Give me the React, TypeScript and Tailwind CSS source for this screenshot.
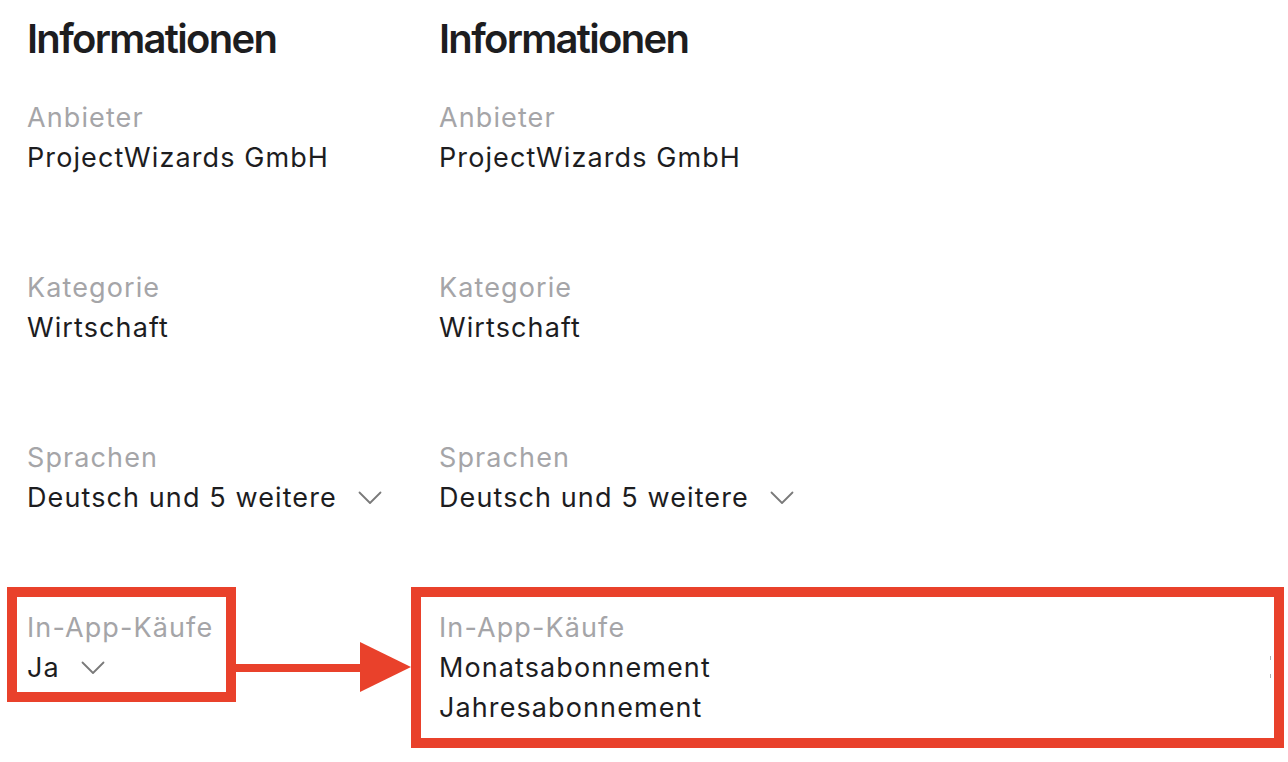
import React from "react";

const Chevron = () => (
  <svg width="24" height="14" viewBox="0 0 24 14" className="shrink-0">
    <path d="M1.5 1.5 L12 12 L22.5 1.5" fill="none" stroke="#7a7a7a" strokeWidth="1.8" strokeLinecap="round" strokeLinejoin="round" />
  </svg>
);

type Item = { label: string; values: string[]; chevron?: boolean };

const Section = ({ label, values, chevron }: Item) => (
  <div className="flex flex-col">
    <div className="text-[27px] leading-[40px] tracking-[1.1px] text-[#a5a5a8]">{label}</div>
    {values.map((v) => (
      <div key={v} className="flex items-center gap-[21px] text-[27px] leading-[40px] tracking-[1.1px] text-[#1d1d1f]">
        <span>{v}</span>
        {chevron && <Chevron />}
      </div>
    ))}
  </div>
);

const Column = ({ inApp }: { inApp: string[] }) => (
  <div className="flex w-[412px] flex-col">
    <h1 className="pt-[15px] text-[40px] font-semibold leading-[48px] tracking-[-1.7px] text-[#1d1d1f]">Informationen</h1>
    <div className="mt-[35px] flex flex-col gap-[90px]">
      <Section label="Anbieter" values={["ProjectWizards GmbH"]} />
      <Section label="Kategorie" values={["Wirtschaft"]} />
      <Section label="Sprachen" values={["Deutsch und 5 weitere"]} chevron />
      <Section label="In-App-Käufe" values={inApp} chevron={inApp.length === 1} />
    </div>
  </div>
);

export default function App() {
  return (
    <div
      className="relative h-[762px] w-[1288px] overflow-hidden bg-white"
      style={{ fontFamily: "Inter, 'Noto Sans', sans-serif" }}
    >
      <div className="flex pl-[27px]">
        <Column inApp={["Ja"]} />
        <Column inApp={["Monatsabonnement", "Jahresabonnement"]} />
      </div>

      {/* annotation overlays */}
      <div className="absolute left-[7px] top-[587px] h-[115px] w-[229px] border-[10px] border-[#e9412b]" />
      <div className="absolute left-[411px] top-[587px] h-[161px] w-[873px] border-[10px] border-[#e9412b]" />
      <div className="absolute left-[236px] top-[664px] h-[8px] w-[126px] bg-[#e9412b]" />
      <svg className="absolute left-[360px] top-[642px]" width="52" height="50" viewBox="0 0 52 50">
        <polygon points="0,0 51,25 0,50" fill="#e9412b" />
      </svg>
      <div className="absolute left-[1270px] top-[656px] h-[4px] w-[1px] bg-[#b0b0b0]" />
      <div className="absolute left-[1270px] top-[674px] h-[4px] w-[1px] bg-[#b0b0b0]" />
    </div>
  );
}
